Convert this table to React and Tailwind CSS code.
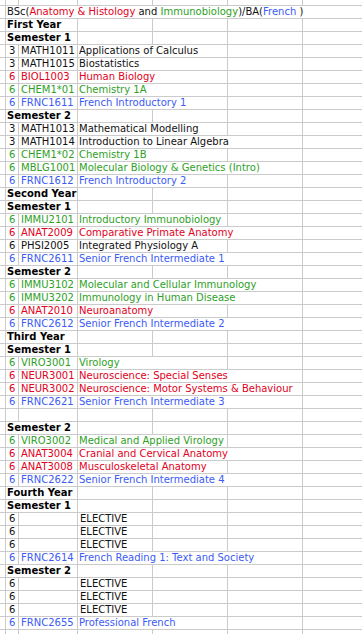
import React from 'react'

const TONE = {
  k: 'text-[#111111]',
  r: 'text-[#e3001b]',
  g: 'text-[#2ea11f]',
  b: 'text-[#3b5bf6]',
}

const SPAN = { 1: '', 2: 'col-span-2', 3: 'col-span-3', 6: 'col-span-6' }

// t: h = heading, c = course, e = elective, blank = empty row
const ROWS = [
  { t: 'title' },
  { t: 'h', text: 'First Year' },
  { t: 'h', text: 'Semester 1' },
  { t: 'c', cr: 3, code: 'MATH1011', name: 'Applications of Calculus', c: 'k', span: 2 },
  { t: 'c', cr: 3, code: 'MATH1015', name: 'Biostatistics', c: 'k', span: 2 },
  { t: 'c', cr: 6, code: 'BIOL1003', name: 'Human Biology', c: 'r', span: 2 },
  { t: 'c', cr: 6, code: 'CHEM1*01', name: 'Chemistry 1A', c: 'g', span: 2 },
  { t: 'c', cr: 6, code: 'FRNC1611', name: 'French Introductory 1', c: 'b', span: 2 },
  { t: 'h', text: 'Semester 2' },
  { t: 'c', cr: 3, code: 'MATH1013', name: 'Mathematical Modelling', c: 'k', span: 2 },
  { t: 'c', cr: 3, code: 'MATH1014', name: 'Introduction to Linear Algebra', c: 'k', span: 3 },
  { t: 'c', cr: 6, code: 'CHEM1*02', name: 'Chemistry 1B', c: 'g', span: 2 },
  { t: 'c', cr: 6, code: 'MBLG1001', name: 'Molecular Biology & Genetics (Intro)', c: 'g', span: 3 },
  { t: 'c', cr: 6, code: 'FRNC1612', name: 'French Introductory 2', c: 'b', span: 2 },
  { t: 'h', text: 'Second Year' },
  { t: 'h', text: 'Semester 1' },
  { t: 'c', cr: 6, code: 'IMMU2101', name: 'Introductory Immunobiology', c: 'g', span: 2 },
  { t: 'c', cr: 6, code: 'ANAT2009', name: 'Comparative Primate Anatomy', c: 'r', span: 3 },
  { t: 'c', cr: 6, code: 'PHSI2005', name: 'Integrated Physiology A', c: 'k', span: 2 },
  { t: 'c', cr: 6, code: 'FRNC2611', name: 'Senior French Intermediate 1', c: 'b', span: 3 },
  { t: 'h', text: 'Semester 2' },
  { t: 'c', cr: 6, code: 'IMMU3102', name: 'Molecular and Cellular Immunology', c: 'g', span: 3 },
  { t: 'c', cr: 6, code: 'IMMU3202', name: 'Immunology in Human Disease', c: 'g', span: 3 },
  { t: 'c', cr: 6, code: 'ANAT2010', name: 'Neuroanatomy', c: 'r', span: 2 },
  { t: 'c', cr: 6, code: 'FRNC2612', name: 'Senior French Intermediate 2', c: 'b', span: 3 },
  { t: 'h', text: 'Third Year' },
  { t: 'h', text: 'Semester 1' },
  { t: 'c', cr: 6, code: 'VIRO3001', name: 'Virology', c: 'g', span: 2 },
  { t: 'c', cr: 6, code: 'NEUR3001', name: 'Neuroscience: Special Senses', c: 'r', span: 3 },
  { t: 'c', cr: 6, code: 'NEUR3002', name: 'Neuroscience: Motor Systems & Behaviour', c: 'r', span: 3 },
  { t: 'c', cr: 6, code: 'FRNC2621', name: 'Senior French Intermediate 3', c: 'b', span: 3 },
  { t: 'blank' },
  { t: 'h', text: 'Semester 2' },
  { t: 'c', cr: 6, code: 'VIRO3002', name: 'Medical and Applied Virology', c: 'g', span: 2 },
  { t: 'c', cr: 6, code: 'ANAT3004', name: 'Cranial and Cervical Anatomy', c: 'r', span: 3 },
  { t: 'c', cr: 6, code: 'ANAT3008', name: 'Musculoskeletal Anatomy', c: 'r', span: 2 },
  { t: 'c', cr: 6, code: 'FRNC2622', name: 'Senior French Intermediate 4', c: 'b', span: 3 },
  { t: 'h', text: 'Fourth Year' },
  { t: 'h', text: 'Semester 1' },
  { t: 'e' },
  { t: 'e' },
  { t: 'e' },
  { t: 'c', cr: 6, code: 'FRNC2614', name: 'French Reading 1: Text and Society', c: 'b', span: 3 },
  { t: 'h', text: 'Semester 2' },
  { t: 'e' },
  { t: 'e' },
  { t: 'e' },
  { t: 'c', cr: 6, code: 'FRNC2655', name: 'Professional French', c: 'b', span: 2 },
  { t: 'blank' },
]

const Cell = ({ span = 1, className = '', children }) => (
  <div className={`border-r border-[#cbcbcb] whitespace-nowrap ${SPAN[span]} ${className}`}>
    {children}
  </div>
)

const empties = (n) => Array.from({ length: n }, (_, i) => <Cell key={`e${i}`} />)

const rowCells = (row) => {
  if (row.t === 'title') {
    return [
      <Cell key="a" />,
      <Cell key="t" span={6} className="pl-[1px] text-[#111111]">
        BSc(<span className={TONE.r}>Anatomy &amp; Histology</span> and{' '}
        <span className={TONE.g}>Immunobiology</span>)/BA(<span className={TONE.b}>French</span> )
      </Cell>,
    ]
  }
  if (row.t === 'h') {
    return [
      <Cell key="a" />,
      <Cell key="h" span={2} className="pl-[1px] font-bold text-black">
        {row.text}
      </Cell>,
      ...empties(4),
    ]
  }
  if (row.t === 'e') {
    return [
      <Cell key="a" />,
      <Cell key="cr" className="pl-[3px] text-[#111111]">6</Cell>,
      <Cell key="code" />,
      <Cell key="n" className="pl-[2px] text-[#111111]">ELECTIVE</Cell>,
      ...empties(3),
    ]
  }
  if (row.t === 'c') {
    const tone = TONE[row.c]
    return [
      <Cell key="a" />,
      <Cell key="cr" className={`pl-[3px] ${tone}`}>{row.cr}</Cell>,
      <Cell key="code" className={`pl-[2px] ${tone}`}>{row.code}</Cell>,
      <Cell key="n" span={row.span} className={`pl-[1px] ${tone}`}>{row.name}</Cell>,
      ...empties(4 - row.span),
    ]
  }
  return empties(7)
}

const GRID = 'grid grid-cols-[6px_13px_59px_75px_75px_75px_75px] border-b border-[#cbcbcb]'

export default function App() {
  return (
    <div className="w-[362px] h-[634px] overflow-hidden bg-white font-['DejaVu_Sans',sans-serif] text-[10px] leading-[12px]">
      {/* partial row above */}
      <div className={`${GRID} h-[6px]`}>{empties(7)}</div>
      {ROWS.map((row, i) => (
        <div key={i} className={`${GRID} h-[13px]`}>
          {rowCells(row)}
        </div>
      ))}
    </div>
  )
}
